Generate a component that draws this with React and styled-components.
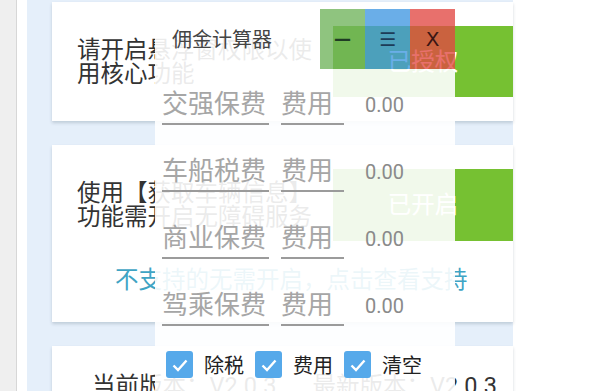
import React from 'react';
import styled, { createGlobalStyle } from 'styled-components';

const GlobalStyle = createGlobalStyle`
  html, body {
    margin: 0;
    padding: 0;
    background: #ffffff;
  }
  body {
    font-family: Roboto, "Noto Sans CJK SC", sans-serif;
  }
`;

const Screen = styled.div`
  position: relative;
  width: 614px;
  height: 391px;
  overflow: hidden;
  display: flex;
  background: #ffffff;
`;

const Gutter = styled.div`
  width: 16px;
  flex-shrink: 0;
  background: #efefef;
  border-right: 1px solid #d7d7d7;
`;

const Spacer = styled.div`
  width: 10px;
  flex-shrink: 0;
  background: #ffffff;
`;

const Main = styled.div`
  width: 461px;
  flex-shrink: 0;
  padding: 2px 0 0 25px;
  background: #e5effa;
  display: flex;
  flex-direction: column;
  gap: 24px;
`;

const Card = styled.div`
  background: #ffffff;
  box-shadow: 0 2px 3px rgba(60, 80, 100, 0.22);
  padding: ${({ $pad }) => $pad || '0 0 0 25px'};
  height: ${({ $h }) => ($h ? `${$h}px` : 'auto')};
  display: flex;
  flex-direction: column;
  justify-content: ${({ $center }) => ($center ? 'center' : 'flex-start')};
  flex-shrink: 0;
`;

const Row = styled.div`
  display: flex;
  align-items: center;
  justify-content: space-between;
`;

const CardText = styled.div`
  width: 256px;
  font-size: 23.5px;
  line-height: 24px;
  color: #333333;
`;

const GreenButton = styled.div`
  width: 180px;
  height: ${({ $h }) => $h}px;
  background: #76c132;
  color: #ffffff;
  font-size: 23.5px;
  display: flex;
  align-items: center;
  justify-content: center;
  padding-bottom: 4px;
  box-sizing: border-box;
`;

const LinkText = styled.div`
  margin-top: 24px;
  padding-left: 38px;
  font-size: 23.5px;
  line-height: 30px;
  color: #3fa4c4;
`;

const VersionLine = styled.div`
  display: flex;
  gap: 36px;
  padding-left: 15px;
  font-size: 23.5px;
  line-height: 24px;
  color: #333333;
`;

/* floating calculator window */
const FloatWindow = styled.div`
  position: absolute;
  left: 155px;
  top: 9px;
  width: 300px;
  display: flex;
  flex-direction: column;
`;

const TitleBar = styled.div`
  display: flex;
  height: 60px;
`;

const Title = styled.div`
  flex: 1;
  padding-left: 17px;
  display: flex;
  align-items: center;
  padding-bottom: 2px;
  background: rgba(255, 255, 255, 0.9);
  font-size: 20px;
  color: #444444;
`;

const WinButton = styled.div`
  width: 45px;
  display: flex;
  align-items: center;
  justify-content: center;
  background: ${({ $bg }) => $bg};
  color: ${({ $fg }) => $fg};
  font-size: ${({ $size }) => $size || 20}px;
  font-weight: ${({ $bold }) => ($bold ? 700 : 400)};
  font-family: "DejaVu Sans", Roboto, sans-serif;
`;

const Body = styled.div`
  background: rgba(255, 255, 255, 0.9);
  padding: 20px 0 40px 7px;
  display: flex;
  flex-direction: column;
  gap: 31px;
`;

const FieldRow = styled.div`
  display: flex;
  align-items: flex-end;
`;

const Field = styled.div`
  width: ${({ $w }) => $w}px;
  margin-right: ${({ $mr }) => $mr}px;
  font-size: 26px;
  line-height: 30px;
  padding-bottom: 4px;
  border-bottom: 2px solid #9b9b9b;
  color: #a6a6a6;
  white-space: nowrap;
`;

const Value = styled.div`
  font-size: 20px;
  line-height: 30px;
  padding-bottom: 5px;
  color: #8a8a8a;
`;

const CheckRow = styled.div`
  display: flex;
  align-items: center;
  gap: 11px;
  padding-left: 4px;
  margin-top: -7px;
`;

const CheckBox = styled.div`
  width: 27px;
  height: 27px;
  border-radius: 3px;
  background: #56a9ea;
  display: flex;
  align-items: center;
  justify-content: center;
`;

const CheckLabel = styled.span`
  font-size: 20px;
  color: #222222;
  width: 40px;
`;

const Check = ({ label }) => (
  <>
    <CheckBox>
      <svg width="20" height="20" viewBox="0 0 20 20">
        <polyline points="3.5,10.5 8,15 16.5,5.5" fill="none" stroke="#ffffff" strokeWidth="2.4" />
      </svg>
    </CheckBox>
    <CheckLabel>{label}</CheckLabel>
  </>
);

const fields = ['交强保费', '车船税费', '商业保费', '驾乘保费'];

export default function App() {
  return (
    <>
      <GlobalStyle />
      <Screen>
        <Gutter />
        <Spacer />
        <Main>
          <Card $h={119} $center>
            <Row>
              <CardText>请开启悬浮窗权限以使用核心功能</CardText>
              <GreenButton $h={71}>已授权</GreenButton>
            </Row>
          </Card>
          <Card $pad="24px 0 27px 25px">
            <Row>
              <CardText>使用【获取车辆信息】功能需开启无障碍服务</CardText>
              <GreenButton $h={72}>已开启</GreenButton>
            </Row>
            <LinkText>不支持的无需开启，点击查看支持</LinkText>
          </Card>
          <Card $pad="28px 0 40px 25px">
            <VersionLine>
              <span>当前版本：V2.0.3</span>
              <span>最新版本：V2.0.3</span>
            </VersionLine>
          </Card>
        </Main>

        <FloatWindow>
          <TitleBar>
            <Title>佣金计算器</Title>
            <WinButton $bg="rgba(111, 179, 91, 0.78)" $fg="#1f3b24" $size={17} $bold>—</WinButton>
            <WinButton $bg="rgba(64, 151, 226, 0.78)" $fg="#1c3c58" $size={19}>☰</WinButton>
            <WinButton $bg="rgba(225, 72, 67, 0.78)" $fg="#3a1614" $size={20}>X</WinButton>
          </TitleBar>
          <Body>
            {fields.map((f) => (
              <FieldRow key={f}>
                <Field $w={107} $mr={12}>{f}</Field>
                <Field $w={63} $mr={21}>费用</Field>
                <Value>0.00</Value>
              </FieldRow>
            ))}
            <CheckRow>
              <Check label="除税" />
              <Check label="费用" />
              <Check label="清空" />
            </CheckRow>
          </Body>
        </FloatWindow>
      </Screen>
    </>
  );
}
